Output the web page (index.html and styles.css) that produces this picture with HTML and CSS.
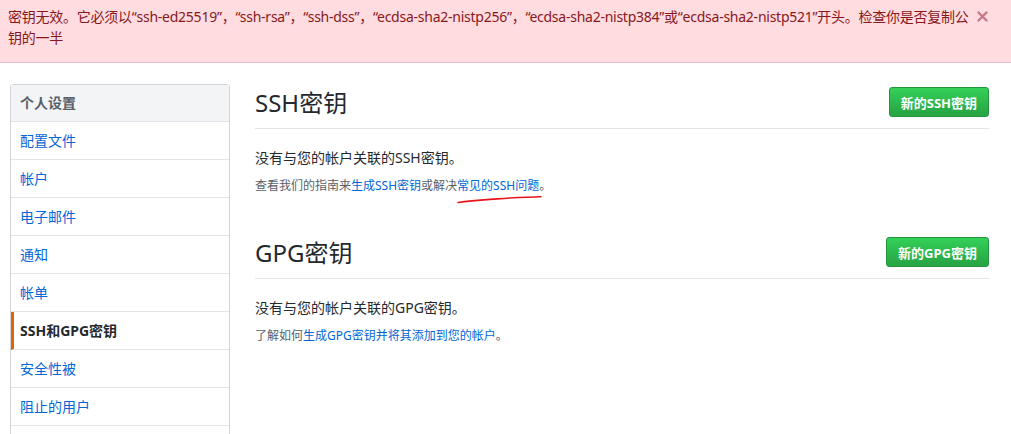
FILE: index.html
```html
<!DOCTYPE html>
<html lang="zh-CN">
<head>
  <meta charset="UTF-8" />
  <meta name="viewport" content="width=device-width, initial-scale=1.0"/>
  <title>SSH和GPG密钥</title>
  <link rel="stylesheet" href="styles.css">
</head>
<body>
  <div class="flash-error">
    <div class="flash-text">密钥无效。它必须以“ssh-ed25519”，“ssh-rsa”，“ssh-dss”，“ecdsa-sha2-nistp256”，“ecdsa-sha2-nistp384”或“ecdsa-sha2-nistp521”开头。检查你是否复制公钥的一半</div>
    <button class="flash-close" type="button" aria-label="关闭">
      <svg width="11" height="11" viewBox="0 0 11 11"><path d="M1.5 1.5l8 8M9.5 1.5l-8 8" stroke="currentColor" stroke-width="2.4" stroke-linecap="round"/></svg>
    </button>
  </div>

  <div class="settings">
    <nav class="menu">
      <div class="menu-heading">个人设置</div>
      <a class="menu-item" href="#">配置文件</a>
      <a class="menu-item" href="#">帐户</a>
      <a class="menu-item" href="#">电子邮件</a>
      <a class="menu-item" href="#">通知</a>
      <a class="menu-item" href="#">帐单</a>
      <a class="menu-item selected" href="#">SSH和GPG密钥</a>
      <a class="menu-item" href="#">安全性被</a>
      <a class="menu-item" href="#">阻止的用户</a>
      <div class="menu-item"></div>
    </nav>

    <main class="content">
      <section class="key-section">
        <div class="subhead">
          <h2>SSH密钥</h2>
          <button class="btn-green" type="button">新的SSH密钥</button>
        </div>
        <p class="blank">没有与您的帐户关联的SSH密钥。</p>
        <p class="note">查看我们的指南来<a href="#">生成SSH密钥</a>或解决<span class="marked"><a href="#">常见的SSH问题</a><svg class="scribble" width="86" height="10" viewBox="0 0 86 10"><path d="M1 8.5C12 7 22 6.2 33 5.4S56 3.4 70 3.2 80 2.6 84 2.8" fill="none" stroke="#e8141a" stroke-width="1.6" stroke-linecap="round"/></svg></span>。</p>
      </section>

      <section class="key-section">
        <div class="subhead">
          <h2>GPG密钥</h2>
          <button class="btn-green" type="button">新的GPG密钥</button>
        </div>
        <p class="blank">没有与您的帐户关联的GPG密钥。</p>
        <p class="note">了解如何<a href="#">生成GPG密钥并将其添加到您的帐户</a>。</p>
      </section>
    </main>
  </div>
</body>
</html>
```

FILE: styles.css
```css
html, body {
  overflow: hidden;
}

body {
  margin: 0;
  font-family: "Noto Sans", "Noto Sans CJK SC", sans-serif;
  font-size: 14px;
  color: #24292e;
  background-color: #fff;
}

a {
  color: #0366d6;
  text-decoration: none;
}

.flash-error {
  display: flex;
  align-items: flex-start;
  background-color: #ffdce0;
  color: #86181d;
  border-bottom: 1px solid #e6bfc4;
  padding: 6px 23px 14px 8px;
  line-height: 21px;
}

.flash-text {
  flex: 1;
  letter-spacing: -0.25px;
}

.flash-close {
  border: none;
  background: none;
  padding: 0;
  margin: 5px 0 0 2px;
  color: #c47a82;
  cursor: pointer;
  display: flex;
}

.settings {
  display: flex;
  gap: 25px;
  padding: 21px 22px 0 10px;
}

.menu {
  width: 218px;
  flex-shrink: 0;
  border: 1px solid #d1d5da;
  border-radius: 3px;
  display: flex;
  flex-direction: column;
}

.menu-heading {
  background-color: #f3f4f6;
  color: #586069;
  font-weight: bold;
  height: 36px;
  line-height: 36px;
  padding-left: 9px;
  border-bottom: 1px solid #e1e4e8;
}

.menu-item {
  height: 37px;
  line-height: 37px;
  padding-left: 9px;
  border-bottom: 1px solid #e1e4e8;
}

.menu-item.selected {
  color: #24292e;
  font-weight: bold;
  border-left: 3px solid #e36209;
  padding-left: 6px;
}

.content {
  flex: 1;
}

.key-section {
  margin-bottom: 38px;
}

.subhead {
  display: flex;
  align-items: center;
  justify-content: space-between;
  height: 36px;
  padding-bottom: 8px;
  border-bottom: 1px solid #e1e4e8;
}

.subhead h2 {
  margin: 0;
  font-size: 24px;
  font-weight: normal;
  line-height: 32px;
  padding-top: 2px;
}

.btn-green {
  font-family: inherit;
  font-size: 13px;
  font-weight: bold;
  color: #fff;
  height: 30px;
  padding: 0 11px;
  border: 1px solid #23963d;
  border-radius: 3px;
  background-image: linear-gradient(#34d058, #28a745 90%);
  cursor: pointer;
}

.blank {
  margin: 18px 0 0;
  line-height: 21px;
}

.note {
  margin: 8px 0 0;
  font-size: 12px;
  line-height: 20px;
  color: #586069;
}

.marked {
  position: relative;
}

.scribble {
  position: absolute;
  left: 0;
  top: 17px;
}
```
